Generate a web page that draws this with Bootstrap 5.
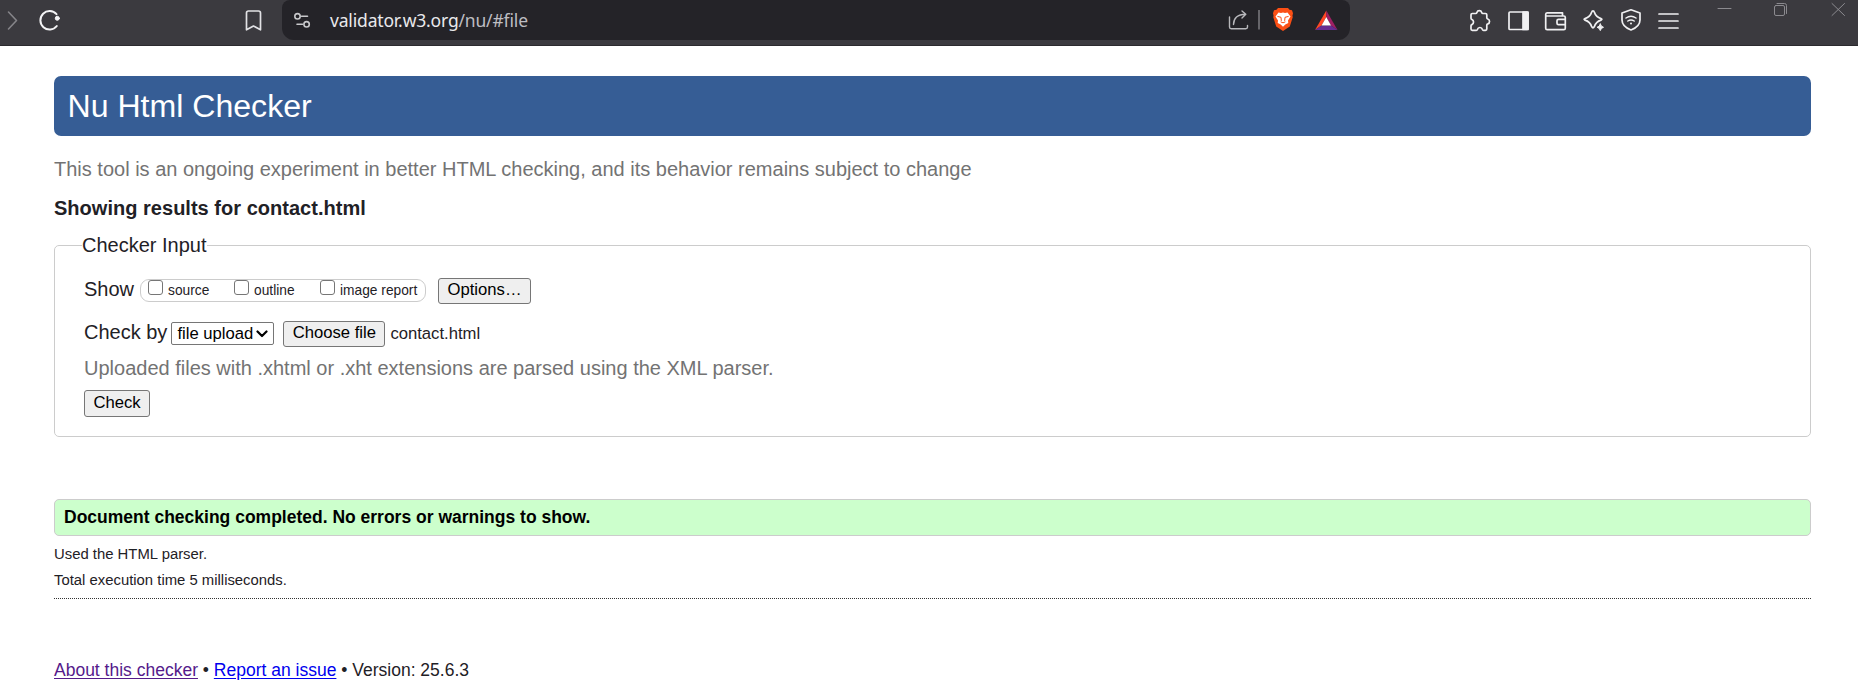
<!DOCTYPE html>
<html lang="en">
<head>
<meta charset="utf-8">
<meta name="viewport" content="width=device-width, initial-scale=1">
<title>Ready to check - Nu Html Checker</title>
<link href="https://cdn.jsdelivr.net/npm/bootstrap@5.3.0/dist/css/bootstrap.min.css" rel="stylesheet">
<style>
  body { font-family: "Liberation Sans", Arial, sans-serif; font-size: 20px; line-height: 30px; color: #1f2126; background: #fff; overflow: hidden; }
  svg { display: block; flex: none; fill: none; stroke-linecap: round; stroke-linejoin: round; }
  .browser-bar { height: 46px; background: #3b3a3f; border-bottom: 1px solid #2b2a2e; }
  .address { width: 1068px; height: 40px; margin-left: 19px; background: #242328; border-radius: 8px 8px 12px 12px; font: 17.5px/40px "Noto Sans", sans-serif; color: #e9e9ec; }
  .url { margin-left: 18px; letter-spacing: -.17px; }
  .url span { color: #bebdc2; }
  .sheet { padding: 30px 47px 0 54px; }
  .title-bar { height: 60px; padding-left: 13.5px; background: #365d95; border-radius: 7px; font-size: 32.1px; line-height: 60px; color: #fff; font-weight: 400; margin: 0; }
  .muted { color: #737373; }
  .intro { margin-top: 18px; }
  .results-for { font-size: 20px; line-height: 30px; font-weight: 700; margin: 9px 0 7px; letter-spacing: .02px; }
  .checker { border: 1px solid #ccc; border-radius: 5px; height: 207px; padding: 0 29px; }
  .checker legend { float: none; width: auto; font-size: 20px; line-height: 30px; margin: 0 0 0 -2px; padding: 0; }
  .show-row { height: 30px; margin-top: 14px; }
  .by-row { height: 30px; margin-top: 13px; }
  .show-opts { width: 286px; height: 23px; margin: 5px 0 0 6px; border: 1px solid #ccc; border-radius: 9px; font-size: 13.75px; padding-left: 7px; }
  .tick { appearance: none; width: 15px; height: 15px; margin: 0; border: 1.3px solid #767676; border-radius: 3px; background: #fff; flex: none; }
  .show-opts label { display: flex; line-height: 16px; }
  .show-opts label span { margin: 3px 0 0 5px; white-space: nowrap; }
  .w-src, .w-out { width: 86px; }
  .plain-btn { border: 1px solid #767676; border-radius: 3px; background: #efefef; color: #000; font-size: 16.67px; line-height: 22px; padding: 0 0 2px; height: 26px; }
  .opt-btn { width: 93px; margin: 4px 0 0 12px; }
  .file-btn { width: 102px; margin: 4px 0 0 9px; }
  .check-btn { width: 66px; height: 27px; }
  .picker { width: 103px; height: 23px; margin: 5px 0 0 4px; border: 1px solid #767676; border-radius: 2px; color: #000; font-size: 16.67px; line-height: 21px; padding: 0 5px; background: #fff; }
  .file-name { font-size: 16.67px; margin: 2px 0 0 5px; }
  .hint { margin: 6px 0 7px; }
  .success { margin-top: 62px; height: 37px; border: 1px solid #ccc; border-radius: 5px; background: #cfc; color: #000; font-size: 17.5px; line-height: 35px; font-weight: 700; padding-left: 9px; }
  .detail { font-size: 14.87px; line-height: 26px; margin: 0; }
  .rule { border-bottom: 1px dotted #333; padding-top: 5px; height: 63px; }
  .about { font-size: 17.5px; line-height: 26px; margin-top: 58px; }
  .about a { color: #00e; text-underline-offset: 2px; }
  .about a.seen { color: #551a8b; }
</style>
</head>
<body>
<header class="browser-bar d-flex align-items-start">
  <svg width="70" height="46" stroke="#858489" stroke-width="1.6"><path d="M8.500 12l8 8.500-8 8.500"/><g stroke="#f4f4f6" stroke-width="2"><path d="M56.500 14.200A9.200 9.200 0 1 0 56.800 26"/><circle cx="57.300" cy="18.300" r="2" fill="#f4f4f6" stroke-width="1"/></g></svg>
  <svg width="193" height="46" stroke="#e2e2e5" stroke-width="1.700"><path d="M176.500 29.800V13q0-2 2-2h10q2 0 2 2v16.800L183.500 26z"/></svg>
  <div class="address d-flex">
    <svg class="ms-2" width="22" height="40" viewBox="290 0 22 40" stroke="#c9c9cc" stroke-width="1.600"><circle cx="297.500" cy="16.300" r="2.700"/><path d="M301.500 16.300H307.500M297 24.300H302.500"/><circle cx="306.600" cy="24.300" r="2.700"/></svg>
    <div class="url">validator.w3.org<span>/nu/#file</span></div>
    <svg class="ms-auto" width="125" height="40" viewBox="1225 0 125 40" stroke="#b8b8bc" stroke-width="1.400"><path d="M1229.500 17v10q0 1.700 1.700 1.700h14.600q1.700 0 1.700-1.700v-1.500M1233.500 24.500c0-6 4-10.300 12-10.300M1242 11l3.800 3.200L1242 18"/><path d="M1259 10v19.500" stroke="#66656a" stroke-width="2" stroke-linecap="butt"/>
      <path d="M1278 8h10l1.500 1.800 2.500.5 1 3-.6 2.700.4 1-3 9.500-6.800 4.500-6.800-4.500-3-9.500.4-1-.6-2.700 1-3 2.500-.5z" fill="#fb4f14" stroke="none"/><path d="M1278.500 12.500l2.500.6 2-.6 2 .6 2.500-.6 3 4-2.500 4 .3 2.500-3 1.500-2.300 2.300-2.300-2.300-3-1.500.3-2.500-2.500-4z" fill="#fff" stroke="none"/><path d="M1277.800 16.500l3.200.8.3 3.200M1288.200 16.500l-3.200.8-.3 3.200M1281 22l2 .8 2-.8" stroke="#fb4f14" stroke-width="1"/>
      <g stroke="none"><path d="M1326.300 10.500L1315 30l6.500-4.500 4.800-8.500z" fill="#ff4724"/><path d="M1326.300 10.500L1337.500 30l-6.500-4.500-4.700-8.500z" fill="#9e1f63"/><path d="M1315 30h22.500l-6.500-4.500h-9.500z" fill="#662d91"/><path d="M1326.300 17l4.700 8.500h-9.500z" fill="#fff"/></g></svg>
  </div>
  <svg width="508" height="45" viewBox="1350 0 508 45" stroke="#f0f0f2" stroke-width="1.700">
    <path d="M1472.300 13.500h3.400q.9 0 1.200-1a2.500 2.500 0 0 1 4.800 0q.3 1 1.200 1h2.600q1.300 0 1.300 1.300v3q0 .9 1 1.200a2.600 2.600 0 0 1 0 4.900q-1 .3-1 1.200v3.900q0 1.300-1.300 1.300h-2q-.8 0-1.100-.9a2.600 2.600 0 0 0-5 0q-.3.9-1.100.9h-4q-1.300 0-1.300-1.300v-3.200q0-.8.9-1.200a2.800 2.800 0 0 0 0-5.100q-.9-.4-.9-1.200v-3.500q0-1.300 1.300-1.300z"/>
    <rect x="1509" y="12" width="19" height="17.500" rx="1"/><path d="M1523 12h5v17.500h-5z" fill="#f0f0f2"/>
    <path d="M1562.500 16v-3.200h-15.500q-1.300 0-1.300 1.700v13.700q0 1.500 1.500 1.500h16.600q1.500 0 1.500-1.500V17.500q0-1.500-1.500-1.500H1546M1565 19.300h-6.500q-1.500 0-1.500 1.500v2.400q0 1.500 1.500 1.500h6.500"/>
    <path d="M1593 10.800q1 0 1.300 1.200 1.500 5 6.700 6.600 1.800.7 0 1.500-5.200 1.600-6.700 6.600-1.300 2.500-2.600 0-1.500-5-6.700-6.600-1.800-.8 0-1.500 5.200-1.600 6.700-6.600.3-1.200 1.300-1.200z"/><path d="M1600.300 24q.6 2.700 3.200 3.300-2.600.6-3.200 3.300-.6-2.700-3.200-3.300 2.600-.6 3.200-3.300z" fill="#f0f0f2" stroke-width="1"/>
    <path d="M1631 9.800l9 3.200v7q0 6.500-9 10-9-3.500-9-10v-7z"/><path d="M1626 18q5-3.600 10 0M1627.800 21q3.200-2.200 6.400 0" stroke-width="1.500"/><circle cx="1631" cy="23.500" r="1" fill="#f0f0f2" stroke="none"/>
    <path d="M1659 14h19M1659 21h19M1659 28h19" stroke-width="1.700"/>
    <g stroke="#8b8a8f" stroke-width="1"><path d="M1718 8.500h13"/><rect x="1774.500" y="5.500" width="10" height="10" rx="1.500"/><path d="M1777 3.500h7.500q2 0 2 2v8"/><path d="M1832 3.500l12.500 12M1844.500 3.500l-12.500 12"/></g>
  </svg>
</header>
<main class="sheet">
  <h1 class="title-bar">Nu Html Checker</h1>
  <p class="intro muted mb-0">This tool is an ongoing experiment in better HTML checking, and its behavior remains subject to change</p>
  <h2 class="results-for">Showing results for contact.html</h2>
  <fieldset class="checker">
    <legend>Checker Input</legend>
    <div class="show-row d-flex align-items-start">
      <span>Show</span>
      <div class="show-opts d-flex">
        <label class="w-src"><input class="tick" type="checkbox"><span>source</span></label>
        <label class="w-out"><input class="tick" type="checkbox"><span>outline</span></label>
        <label><input class="tick" type="checkbox"><span>image report</span></label>
      </div>
      <button class="plain-btn opt-btn" type="button">Options…</button>
    </div>
    <div class="by-row d-flex align-items-start">
      <span>Check by</span>
      <div class="picker d-flex align-items-center justify-content-between"><span>file upload</span><svg width="12" height="8" stroke="#000" stroke-width="2.200"><path d="M1.500 1.500L6 6l4.500-4.500"/></svg></div>
      <button class="plain-btn file-btn" type="button">Choose file</button>
      <span class="file-name">contact.html</span>
    </div>
    <p class="muted hint">Uploaded files with .xhtml or .xht extensions are parsed using the XML parser.</p>
    <button class="plain-btn check-btn d-block" type="submit">Check</button>
  </fieldset>
  <p class="success mb-0">Document checking completed. No errors or warnings to show.</p>
  <div class="rule">
    <p class="detail">Used the HTML parser.</p>
    <p class="detail">Total execution time 5 milliseconds.</p>
  </div>
  <p class="about mb-0"><a class="seen" href="#">About this checker</a> • <a href="#">Report an issue</a> • Version: 25.6.3</p>
</main>
<script src="https://cdn.jsdelivr.net/npm/bootstrap@5.3.0/dist/js/bootstrap.bundle.min.js"></script>
</body>
</html>
